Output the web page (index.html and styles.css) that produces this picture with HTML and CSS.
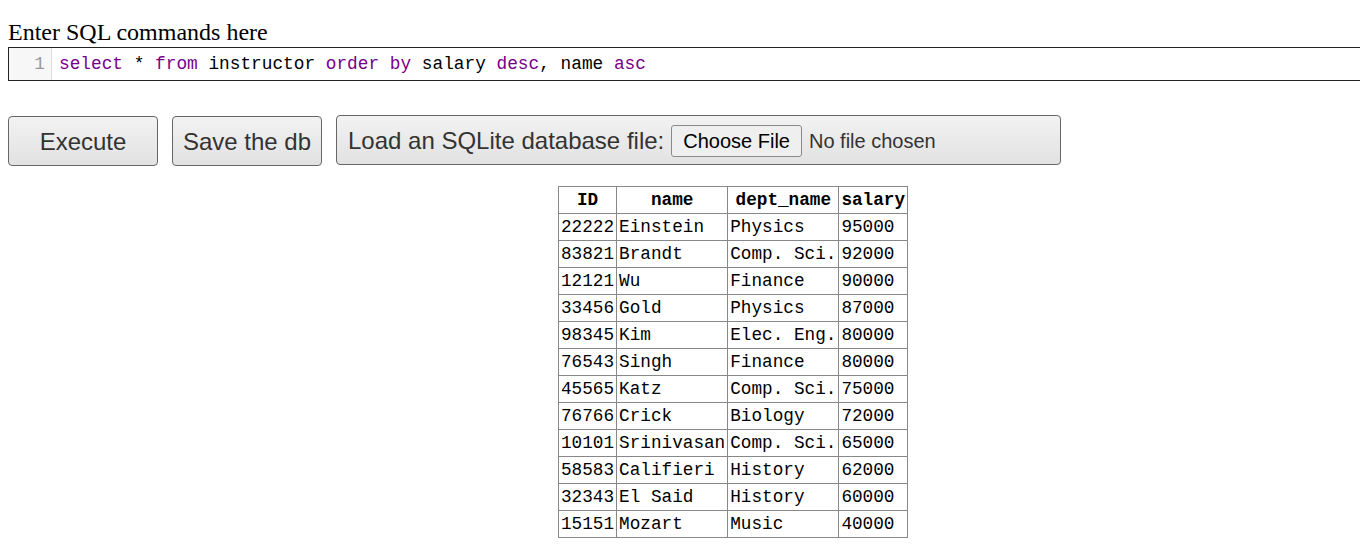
FILE: index.html
```html
<!DOCTYPE html>
<html>
<head>
<meta charset="utf-8">
<title>SQL</title>
<link rel="stylesheet" href="styles.css">
</head>
<body>
<label class="prompt">Enter SQL commands here</label>
<div class="editor">
  <div class="gutter">1</div>
  <div class="code"><span class="kw">select</span> * <span class="kw">from</span> instructor <span class="kw">order</span> <span class="kw">by</span> salary <span class="kw">desc</span>, name <span class="kw">asc</span></div>
</div>
<div class="actions">
  <button class="btn btn-exec">Execute</button>
  <button class="btn btn-save">Save the db</button>
  <div class="btn btn-load">Load an SQLite database file:<span class="file-btn">Choose File</span><span class="file-name">No file chosen</span></div>
</div>
<div class="results">
<table class="grid">
<thead><tr><th>ID</th><th>name</th><th>dept_name</th><th>salary</th></tr></thead>
<tbody>
<tr><td>22222</td><td>Einstein</td><td>Physics</td><td>95000</td></tr>
<tr><td>83821</td><td>Brandt</td><td>Comp. Sci.</td><td>92000</td></tr>
<tr><td>12121</td><td>Wu</td><td>Finance</td><td>90000</td></tr>
<tr><td>33456</td><td>Gold</td><td>Physics</td><td>87000</td></tr>
<tr><td>98345</td><td>Kim</td><td>Elec. Eng.</td><td>80000</td></tr>
<tr><td>76543</td><td>Singh</td><td>Finance</td><td>80000</td></tr>
<tr><td>45565</td><td>Katz</td><td>Comp. Sci.</td><td>75000</td></tr>
<tr><td>76766</td><td>Crick</td><td>Biology</td><td>72000</td></tr>
<tr><td>10101</td><td>Srinivasan</td><td>Comp. Sci.</td><td>65000</td></tr>
<tr><td>58583</td><td>Califieri</td><td>History</td><td>62000</td></tr>
<tr><td>32343</td><td>El Said</td><td>History</td><td>60000</td></tr>
<tr><td>15151</td><td>Mozart</td><td>Music</td><td>40000</td></tr>
</tbody>
</table>
</div>
</body>
</html>
```
FILE: styles.css
```css
html { overflow-x: hidden; }
body {
  margin: 8px;
  font-family: "Liberation Serif", serif;
  background: #fff;
  color: #000;
}
.prompt {
  display: block;
  font-size: 24px;
  line-height: 27px;
  margin-top: 11px;
  margin-bottom: 1px;
}
.editor {
  display: flex;
  border: 1px solid #222;
  height: 32px;
  margin-right: -40px;
  font-family: "Liberation Mono", monospace;
  font-size: 17.8px;
  line-height: 32px;
}
.gutter {
  width: 36px;
  padding-right: 6px;
  text-align: right;
  background: #f7f7f7;
  border-right: 1px solid #ddd;
  color: #999;
}
.code {
  padding-left: 7px;
  white-space: pre;
  color: #000;
}
.kw { color: #708; }
.actions {
  display: flex;
  align-items: flex-start;
  gap: 14px;
  margin-top: 34px;
}
.btn {
  box-sizing: border-box;
  height: 50px;
  font-family: "Liberation Sans", Arial, sans-serif;
  font-size: 24px;
  color: #333;
  background: linear-gradient(#f2f2f2, #e2e2e2);
  border: 1px solid #666;
  border-radius: 4px;
  display: flex;
  align-items: center;
  justify-content: center;
  padding: 2px 0 0;
  margin: 0;
}
.btn-exec { width: 150px; margin-top: 1px; }
.btn-save { width: 150px; margin-top: 1px; }
.btn-load {
  width: 725px;
  justify-content: flex-start;
  padding-left: 11px;
}
.file-btn {
  margin-left: 7px;
  height: 32px;
  box-sizing: border-box;
  padding: 0 11px;
  border: 1px solid #8a8a8a;
  border-radius: 3px;
  background: #efefef;
  color: #000;
  font-size: 20px;
  display: flex;
  align-items: center;
}
.file-name {
  margin-left: 7px;
  font-size: 20px;
  color: #333;
}
.results {
  margin-top: 20px;
  padding-left: 550px;
}
.grid {
  border-collapse: collapse;
  font-family: "Liberation Mono", monospace;
  font-size: 17.7px;
  line-height: 24px;
}
.grid th, .grid td {
  border: 1px solid #888;
  padding: 1px 2px 1px 2px;
  white-space: pre;
}
.grid th {
  font-weight: bold;
  text-align: center;
}
.grid td { text-align: left; }
```
